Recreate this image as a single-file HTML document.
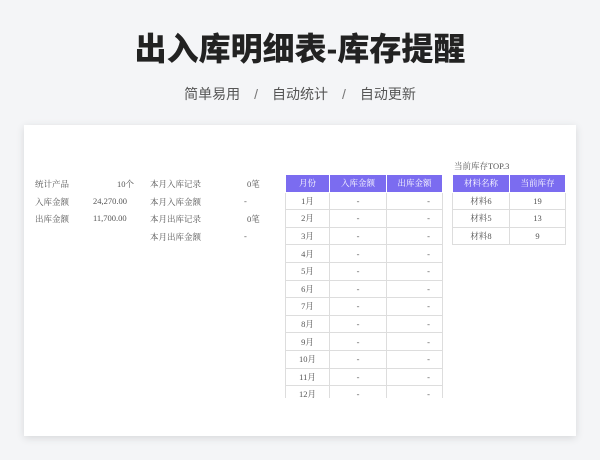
<!DOCTYPE html>
<html><head><meta charset="utf-8"><style>
*{margin:0;padding:0;box-sizing:border-box}
body{width:600px;height:460px;background:#f4f5f7;position:relative;overflow:hidden;font-family:"Liberation Sans","Noto Sans CJK SC",sans-serif}
.t{position:absolute;left:0;width:600px;text-align:center;top:24px;font-size:32px;font-weight:900;color:#222;letter-spacing:0px}
.s{position:absolute;left:0;width:600px;text-align:center;top:84px;font-size:14px;color:#555}
.s span{margin:0 14px;color:#777}
.card{position:absolute;left:24px;top:125px;width:552px;height:311px;background:#fff;box-shadow:0 2px 8px rgba(0,0,0,.12)}
.a{position:absolute;font-family:"Liberation Serif","Noto Serif CJK SC",serif;font-size:8.5px;color:#555;white-space:nowrap}
table{position:absolute;border-collapse:collapse;font-family:"Liberation Serif","Noto Serif CJK SC",serif;font-size:8.5px;color:#555}
td,th{border:1px solid #ddd;height:17.6px;text-align:center;padding:0}
th{background:#7b6cf0;color:#fff;font-weight:normal;border-color:#fff}
.r{text-align:right;padding-right:12px}
</style></head><body>
<div class="t">出入库明细表-库存提醒</div>
<div class="s">简单易用<span>/</span>自动统计<span>/</span>自动更新</div>
<div class="card"></div>
<div class="a" style="left:35px;top:178px">统计产品</div><div class="a" style="left:117px;top:178px">10个</div>
<div class="a" style="left:35px;top:196px">入库金额</div><div class="a" style="left:93px;top:196px">24,270.00</div>
<div class="a" style="left:35px;top:213px">出库金额</div><div class="a" style="left:93px;top:213px">11,700.00</div>
<div class="a" style="left:150px;top:178px">本月入库记录</div><div class="a" style="left:247px;top:178px">0笔</div>
<div class="a" style="left:150px;top:196px">本月入库金额</div><div class="a" style="left:244px;top:196px">-</div>
<div class="a" style="left:150px;top:213px">本月出库记录</div><div class="a" style="left:247px;top:213px">0笔</div>
<div class="a" style="left:150px;top:231px">本月出库金额</div><div class="a" style="left:244px;top:231px">-</div>
<div style="position:absolute;left:285px;top:174px;width:158px;height:224px;overflow:hidden">
<table style="left:0;top:0;width:158px">
<tr><th style="width:44px">月份</th><th style="width:57px">入库金额</th><th>出库金额</th></tr>
<tr><td>1月</td><td>-</td><td class="r">-</td></tr>
<tr><td>2月</td><td>-</td><td class="r">-</td></tr>
<tr><td>3月</td><td>-</td><td class="r">-</td></tr>
<tr><td>4月</td><td>-</td><td class="r">-</td></tr>
<tr><td>5月</td><td>-</td><td class="r">-</td></tr>
<tr><td>6月</td><td>-</td><td class="r">-</td></tr>
<tr><td>7月</td><td>-</td><td class="r">-</td></tr>
<tr><td>8月</td><td>-</td><td class="r">-</td></tr>
<tr><td>9月</td><td>-</td><td class="r">-</td></tr>
<tr><td>10月</td><td>-</td><td class="r">-</td></tr>
<tr><td>11月</td><td>-</td><td class="r">-</td></tr>
<tr><td>12月</td><td>-</td><td class="r">-</td></tr>
</table></div>
<div class="a" style="left:454px;top:160px">当前库存TOP.3</div>
<table style="left:452px;top:174px;width:114px">
<tr><th style="width:57px">材料名称</th><th>当前库存</th></tr>
<tr><td>材料6</td><td>19</td></tr>
<tr><td>材料5</td><td>13</td></tr>
<tr><td>材料8</td><td>9</td></tr>
</table>
</body></html>
